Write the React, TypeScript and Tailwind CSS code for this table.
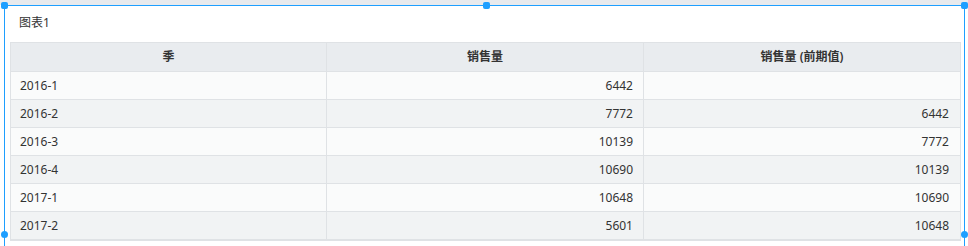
import React from "react";

const rows: [string, string, string][] = [
  ["2016-1", "6442", ""],
  ["2016-2", "7772", "6442"],
  ["2016-3", "10139", "7772"],
  ["2016-4", "10690", "10139"],
  ["2017-1", "10648", "10690"],
  ["2017-2", "5601", "10648"],
];

function Handle({ cls }: { cls: string }) {
  return <div className={`absolute w-[7px] h-[7px] rounded-[2px] bg-[#1e9fff] ${cls}`} />;
}

export default function App() {
  return (
    <div
      className="w-[968px] h-[246px] bg-white overflow-hidden relative"
      style={{ fontFamily: '"Noto Sans", "Noto Sans CJK SC", sans-serif' }}
    >
      <div className="h-[5px] bg-[#e8eaed]" />
      <div className="ml-[4px] w-[961px] h-[400px] border border-[#1e9fff] relative">
        <div className="h-[36px] pl-[14px] pt-[9px] text-[12px] text-[#333] leading-[16px]">图表1</div>
        <div className="ml-[5px] w-[951px] border border-[#dfe2e5]">
          <div className="grid grid-cols-[316px_317px_1fr] h-[29px] bg-[#e9ecef] border-b border-[#dfe2e5] text-[12px] font-semibold text-[#333]">
            <div className="flex items-center justify-center border-r border-[#dfe2e5]">季</div>
            <div className="flex items-center justify-center border-r border-[#dfe2e5]">销售量</div>
            <div className="flex items-center justify-center">销售量 (前期值)</div>
          </div>
          {rows.map((r, i) => (
            <div
              key={i}
              className={`grid grid-cols-[316px_317px_1fr] h-[28px] border-b border-[#dfe2e5] text-[12px] text-[#333] ${
                i % 2 === 0 ? "bg-[#fafbfb]" : "bg-[#f1f3f4]"
              }`}
            >
              <div className="flex items-center pl-[9px] border-r border-[#dfe2e5]">{r[0]}</div>
              <div className="flex items-center justify-end pr-[10px] border-r border-[#dfe2e5]">{r[1]}</div>
              <div className="flex items-center justify-end pr-[11px]">{r[2]}</div>
            </div>
          ))}
        </div>
        <Handle cls="-left-[4px] -top-[4px]" />
        <Handle cls="left-[478px] -top-[4px]" />
        <Handle cls="-right-[4px] -top-[4px]" />
        <Handle cls="-left-[4px] top-[225px] rounded-full" />
        <Handle cls="-right-[4px] top-[225px] rounded-full" />
      </div>
    </div>
  );
}
